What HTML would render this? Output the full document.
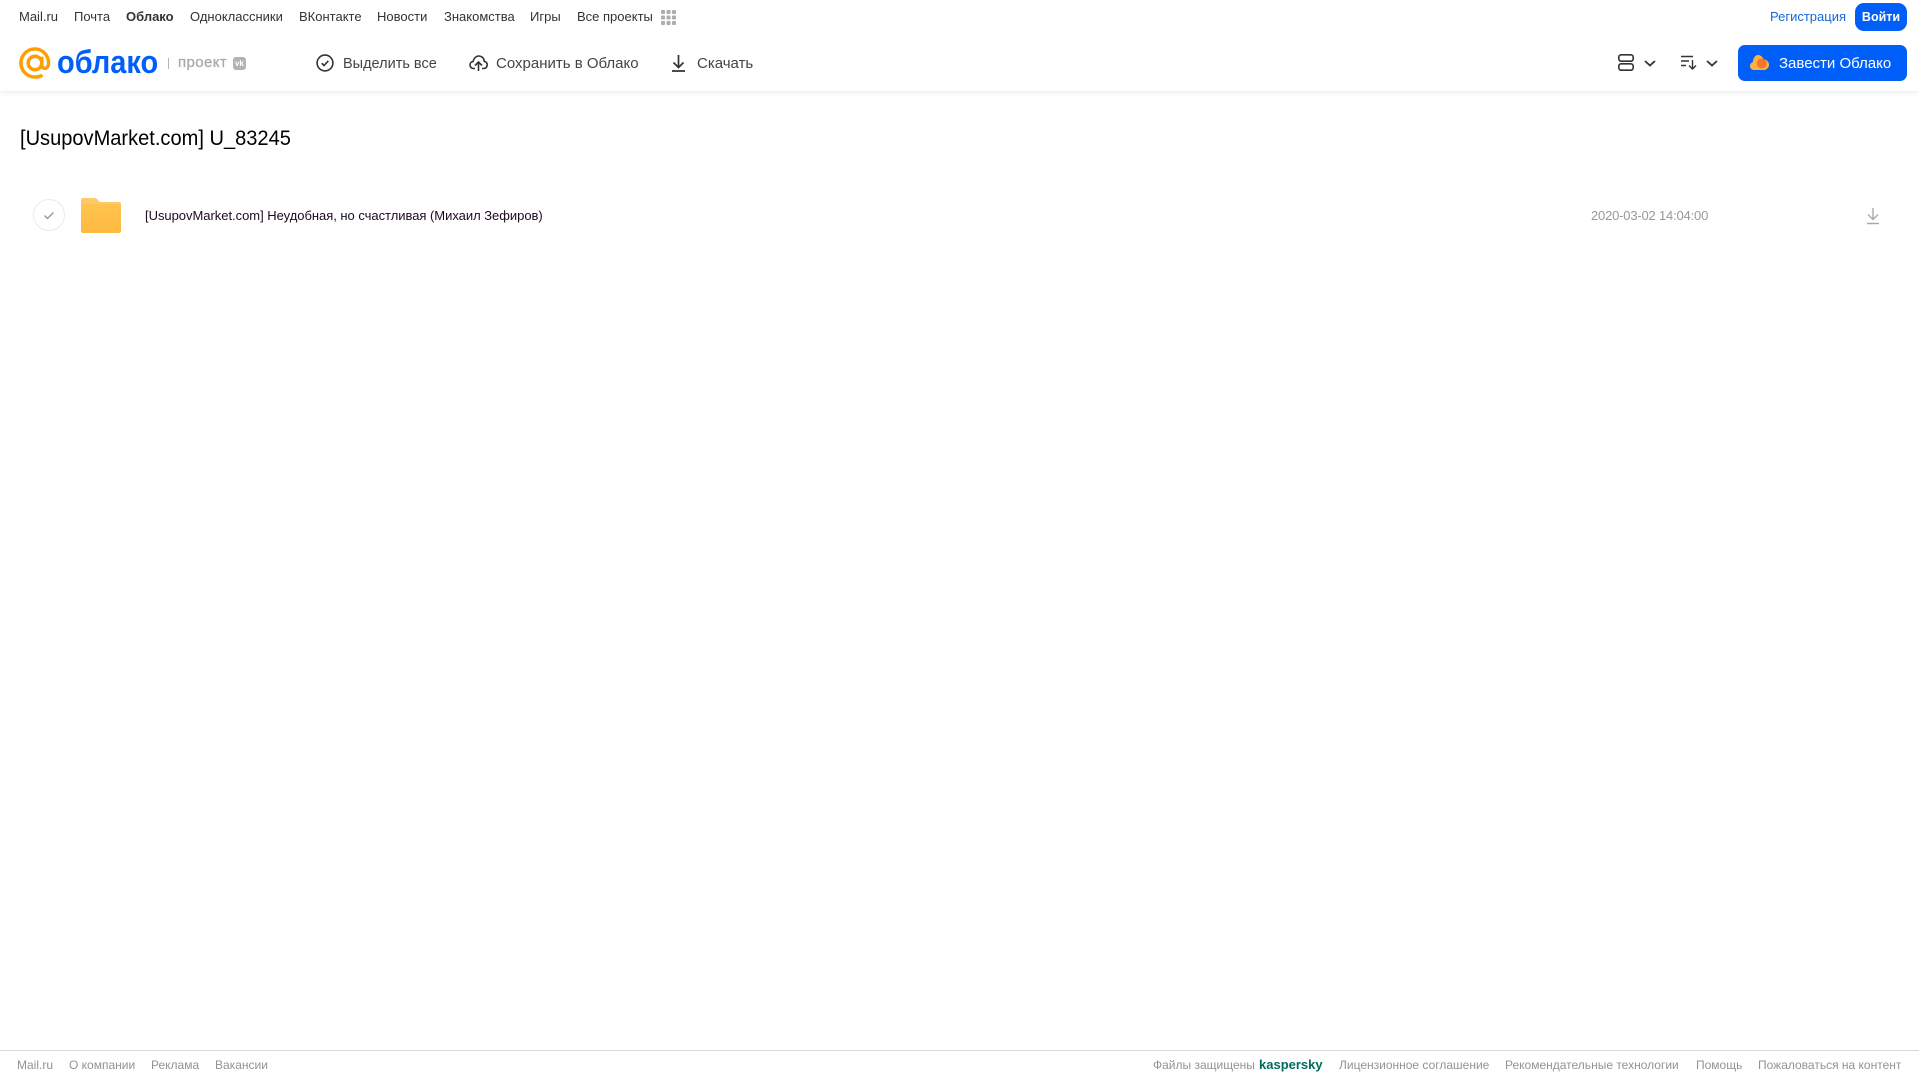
<!DOCTYPE html>
<html lang="ru"><head><meta charset="utf-8"><title>Облако</title>
<style>
html,body{margin:0;padding:0;width:1919px;height:1079px;overflow:hidden;background:#fff;font-family:"Liberation Sans",sans-serif}
.t{position:absolute;white-space:nowrap;line-height:20px}
.n{top:7px;font-size:13px;color:#333}
.h{top:54px;font-size:15px;color:#444}
.f{top:1055px;font-size:12px;color:#919399}
svg{position:absolute;overflow:visible}
</style></head><body>
<div style="position:absolute;left:0;top:0;width:1919px;height:91px;background:#fff;box-shadow:0 1px 6px rgba(0,0,0,.09)"></div>

<span class="t n" style="left:19px">Mail.ru</span>
<span class="t n" style="left:74px">Почта</span>
<span class="t n" style="left:126px;font-weight:bold">Облако</span>
<span class="t n" style="left:190px">Одноклассники</span>
<span class="t n" style="left:299px">ВКонтакте</span>
<span class="t n" style="left:377px">Новости</span>
<span class="t n" style="left:444px">Знакомства</span>
<span class="t n" style="left:530px">Игры</span>
<span class="t n" style="left:577px">Все проекты</span>
<svg style="left:661px;top:10px" width="15" height="15" fill="#adadad"><rect x="0" y="0" width="4" height="4" rx="1"/><rect x="5.500" y="0" width="4" height="4" rx="1"/><rect x="11" y="0" width="4" height="4" rx="1"/><rect x="0" y="5.500" width="4" height="4" rx="1"/><rect x="5.500" y="5.500" width="4" height="4" rx="1"/><rect x="11" y="5.500" width="4" height="4" rx="1"/><rect x="0" y="11" width="4" height="4" rx="1"/><rect x="5.500" y="11" width="4" height="4" rx="1"/><rect x="11" y="11" width="4" height="4" rx="1"/></svg>

<span class="t n" style="left:1770px;color:#1567d8">Регистрация</span>
<div style="position:absolute;left:1855px;top:3px;width:52px;height:28px;border-radius:9px;background:#005ff9;color:#fff;font-size:12.500px;line-height:28px;text-align:center;font-weight:bold">Войти</div>

<svg style="left:19px;top:47px" width="32" height="32" viewBox="0 0 33 33" fill="none" stroke="#ff9e00" stroke-width="3.600"><circle cx="16.500" cy="16.500" r="7"/><path d="M23.500 10v8.500c0 5 7 5 7-2C30.500 8.500 24 2 16.500 2 8.500 2 2 8.500 2 16.500S8.500 31 16.500 31c3 0 5.500-.7 7.500-2"/></svg>
<span class="t" style="left:57px;top:44px;font-size:32px;line-height:36px;color:#005ff9;font-weight:bold;transform:scaleX(.905);transform-origin:0 0">облако</span>
<div style="position:absolute;left:168px;top:58px;width:1px;height:11px;background:#b5b5b5"></div>
<span class="t" style="left:178px;top:53px;font-size:15px;color:#aaa;letter-spacing:.4px;-webkit-text-stroke:.3px #aaa">проект</span>
<div style="position:absolute;left:233px;top:57px;width:13px;height:13px;border-radius:3px;background:#b3b3b3;color:#fff;font-size:8px;font-weight:bold;line-height:13px;text-align:center">vk</div>

<svg style="left:316px;top:54px" width="18" height="18" viewBox="0 0 18 18" fill="none" stroke="#333" stroke-width="1.600"><circle cx="9" cy="9" r="7.900"/><path d="M5.700 9.200l2.300 2.300 4.300-4.600"/></svg>
<span class="t h" style="left:343px;font-size:14.500px">Выделить все</span>
<svg style="left:469px;top:54px" width="19" height="18" viewBox="0 0 19 18" fill="none" stroke="#333" stroke-width="1.600"><path d="M6 14.500H4.500C2.500 14.500 1 13 1 11c0-1.800 1.300-3.200 3-3.400C4.500 4.800 6.800 2 9.800 2c3 0 5.300 2.300 5.500 5.300 1.800.4 2.900 1.800 2.900 3.700 0 2-1.500 3.500-3.500 3.500H13"/><path d="M9.500 17V8.500M6 11.500l3.500-3.500 3.500 3.500"/></svg>
<span class="t h" style="left:496px">Сохранить в Облако</span>
<svg style="left:671px;top:54px" width="15" height="18" viewBox="0 0 15 18" fill="none" stroke="#333" stroke-width="1.700"><path d="M7.500 1v12M2.500 8.500l5 5 5-5M1 17h13"/></svg>
<span class="t h" style="left:697px">Скачать</span>

<svg style="left:1618px;top:54px" width="16" height="17" viewBox="0 0 16 17" fill="none" stroke="#333" stroke-width="1.600"><rect x=".8" y=".8" width="14.400" height="6.400" rx="2.400"/><rect x=".8" y="9.800" width="14.400" height="6.400" rx="2.400"/></svg>
<svg style="left:1644px;top:60px" width="12" height="7" fill="none" stroke="#333" stroke-width="1.800"><path d="M1 1l5 4.500L11 1"/></svg>
<svg style="left:1681px;top:55px" width="16" height="15" fill="none" stroke="#333" stroke-width="1.400"><path d="M0 1.500h12M0 6h8M0 10.500h5M11.500 5v8.500M8 10.500l3.500 3.500 3.500-3.500"/></svg>
<svg style="left:1706px;top:60px" width="12" height="7" fill="none" stroke="#333" stroke-width="1.800"><path d="M1 1l5 4.500L11 1"/></svg>

<div style="position:absolute;left:1738px;top:45px;width:169px;height:36px;border-radius:7px;background:#005ff9"></div>
<svg style="left:1750px;top:54px" width="19" height="17" viewBox="0 0 19 17"><path d="M4 16C1.800 16 0 14.300 0 12c0-1.900 1.200-3.300 2.800-3.800C3 4.400 5.200 1 8 1c2.500 0 4.600 1.800 5.300 4.200 3 0 5.700 2.500 5.700 5.500 0 3-2.400 5.300-5.400 5.300z" fill="#ffb13d"/><circle cx="11.800" cy="9.500" r="5" fill="#f5762b"/></svg>
<span class="t" style="left:1779px;top:54px;font-size:15px;color:#fff">Завести Облако</span>

<span class="t" style="left:20px;top:127px;font-size:21px;line-height:24px;color:#000;transform:scaleX(.955);transform-origin:0 0">[UsupovMarket.com] U_83245</span>

<svg style="left:33px;top:199px" width="33" height="33" fill="none"><circle cx="16" cy="16" r="15.500" stroke="#ebebeb" fill="#fff"/><path d="M11.500 16.500l3 3 6-6" stroke="#999" stroke-width="1.400"/></svg>
<svg style="left:81px;top:197px" width="40" height="36" viewBox="0 0 40 36"><defs><linearGradient id="g" x1="0" y1="0" x2="0" y2="1"><stop offset="0" stop-color="#ffc450"/><stop offset="1" stop-color="#ffb93f"/></linearGradient></defs><path d="M2 1h11c1.500 0 2.500.6 3.500 1.600L19 5h19c1.100 0 2 .9 2 2v3H0V3c0-1.100.9-2 2-2z" fill="#ffc869"/><path d="M0 9c0-1.100.9-2 2-2h36c1.100 0 2 .9 2 2v25c0 1.100-.9 2-2 2H2c-1.100 0-2-.9-2-2z" fill="url(#g)"/></svg>
<span class="t" style="left:145px;top:206px;font-size:13px;color:#1c0a24;letter-spacing:-.03px">[UsupovMarket.com] Неудобная, но счастливая (Михаил Зефиров)</span>
<span class="t" style="left:1591px;top:206px;font-size:13px;color:#999;letter-spacing:-.19px">2020-03-02 14:04:00</span>
<svg style="left:1866px;top:207px" width="14" height="18" viewBox="0 0 14 18" fill="none" stroke="#aaa" stroke-width="1.400"><path d="M7 1v11M2 7.500l5 5 5-5M1 16.500h12"/></svg>

<div style="position:absolute;left:0;top:1050px;width:1919px;height:1px;background:#d8d8d8"></div>
<span class="t f" style="left:17px">Mail.ru</span>
<span class="t f" style="left:69px">О компании</span>
<span class="t f" style="left:151px">Реклама</span>
<span class="t f" style="left:215px">Вакансии</span>
<span class="t f" style="left:1153px">Файлы защищены</span>
<span class="t f" style="left:1259px;color:#006d5c;font-weight:bold;font-size:13px">kaspersky</span>
<span class="t f" style="left:1339px">Лицензионное соглашение</span>
<span class="t f" style="left:1505px">Рекомендательные технологии</span>
<span class="t f" style="left:1696px">Помощь</span>
<span class="t f" style="left:1758px">Пожаловаться на контент</span>
</body></html>
